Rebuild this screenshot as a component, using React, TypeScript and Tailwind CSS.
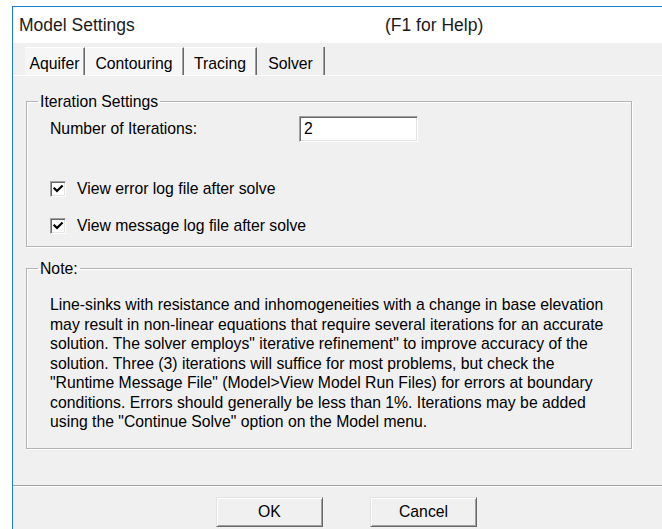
import React from "react";

// Classic Win32-style "Model Settings" property sheet, Solver page.

type TabProps = { label: string; width: string; active?: boolean };

function Tab({ label, width, active }: TabProps) {
    return (
        <div
            className={`${width} h-[28px] flex items-center justify-center pt-[5px] border-r border-[#696969] shadow-[inset_-1px_0_0_#a0a0a0] ${
                active ? "bg-[#f0f0f0]" : "bg-[#f6f6f6] border-t border-t-white"
            }`}
        >
            {label}
        </div>
    );
}

function CheckBox({ label }: { label: string }) {
    return (
        <label className="flex items-center h-[16px]">
            <span className="w-[16px] h-[16px] bg-white border border-t-[#a0a0a0] border-l-[#a0a0a0] border-r-white border-b-white shadow-[inset_1px_1px_0_#696969,inset_-1px_-1px_0_#e3e3e3] flex items-center justify-center">
                <svg width="12" height="12" viewBox="0 0 12 12">
                    <path d="M2.5 5.5 L5 8 L9.8 3.2" fill="none" stroke="#000" strokeWidth="2.2" strokeLinecap="square" />
                </svg>
            </span>
            <span className="ml-[11px]">{label}</span>
        </label>
    );
}

function Button({ label }: { label: string }) {
    return (
        <button className="w-[107px] h-[30px] bg-[#f0f0f0] border border-t-[#e3e3e3] border-l-[#e3e3e3] border-r-[#696969] border-b-[#696969] shadow-[inset_1px_1px_0_#fff,inset_-1px_-1px_0_#a0a0a0] text-[15.75px] text-black">
            {label}
        </button>
    );
}

export default function App() {
    return (
        <div className="w-[662px] h-[529px] bg-white pl-[12px] pt-[6px] overflow-hidden font-['Liberation_Sans',Arial,sans-serif] text-black text-[15.75px]">
            <div className="h-[523px] w-[700px] border-l border-t border-[#1a80d6] bg-[#f0f0f0] flex flex-col">
                {/* title bar */}
                <div className="h-[36px] bg-white flex items-center text-[17.5px] text-[#1a1a1a]">
                    <span className="w-[372px] pl-[6px]">Model Settings</span>
                    <span>(F1 for Help)</span>
                </div>

                {/* tab strip */}
                <div className="h-[32px] flex items-end pl-[12px]">
                    <Tab label="Aquifer" width="w-[60px]" />
                    <Tab label="Contouring" width="w-[99px]" />
                    <Tab label="Tracing" width="w-[73px]" />
                    <Tab label="Solver" width="w-[68px]" active />
                </div>

                {/* page body */}
                <div className="flex-1 border-t border-white pl-[13px] pt-[17px]">
                    <fieldset className="w-[606px] h-[154px] border border-[#b4b4b4] shadow-[1px_1px_0_#fff,inset_1px_1px_0_#fff]">
                        <legend className="ml-[11px] px-[2px] leading-[17px]">Iteration Settings</legend>
                        <div className="pl-[23px] pt-[6px]">
                            <div className="flex items-center">
                                <span className="w-[249px]">Number of Iterations:</span>
                                <div className="w-[119px] h-[26px] bg-white border border-t-[#a0a0a0] border-l-[#a0a0a0] border-r-white border-b-white shadow-[inset_1px_1px_0_#696969,inset_-1px_-1px_0_#e3e3e3] flex items-center pl-[4px]">
                                    2
                                </div>
                            </div>
                            <div className="mt-[39px] flex flex-col gap-[21px]">
                                <CheckBox label="View error log file after solve" />
                                <CheckBox label="View message log file after solve" />
                            </div>
                        </div>
                    </fieldset>

                    <fieldset className="mt-[13px] w-[606px] h-[189px] border border-[#b4b4b4] shadow-[1px_1px_0_#fff,inset_1px_1px_0_#fff]">
                        <legend className="ml-[11px] px-[2px] leading-[17px]">Note:</legend>
                        <p className="pl-[23px] pt-[18px] leading-[19.5px] whitespace-nowrap">
                            Line-sinks with resistance and inhomogeneities with a change in base elevation
                            <br />
                            may result in non-linear equations that require several iterations for an accurate
                            <br />
                            solution. The solver employs" iterative refinement" to improve accuracy of the
                            <br />
                            solution. Three (3) iterations will suffice for most problems, but check the
                            <br />
                            "Runtime Message File" (Model&gt;View Model Run Files) for errors at boundary
                            <br />
                            conditions. Errors should generally be less than 1%. Iterations may be added
                            <br />
                            using the "Continue Solve" option on the Model menu.
                        </p>
                    </fieldset>
                </div>

                {/* button row */}
                <div className="h-[44px] border-t border-[#a0a0a0] shadow-[inset_0_1px_0_#fff] pt-[11px] pl-[203px] flex items-start gap-[47px]">
                    <Button label="OK" />
                    <Button label="Cancel" />
                </div>
            </div>
        </div>
    );
}
